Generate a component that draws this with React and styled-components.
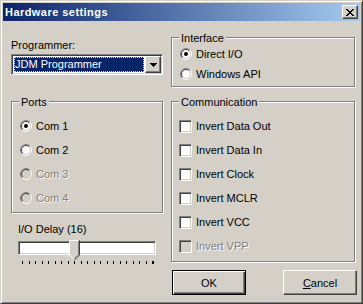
import React from 'react'
import styled, { createGlobalStyle } from 'styled-components'

const GlobalStyle = createGlobalStyle`
  body {
    margin: 0;
    background: #d4d0c8;
  }
`

const FACE = '#d4d0c8'

const Window = styled.div`
  width: 363px;
  height: 304px;
  box-sizing: border-box;
  display: flex;
  flex-direction: column;
  padding: 2px;
  background: ${FACE};
  border: 1px solid;
  border-color: ${FACE} #404040 #404040 ${FACE};
  box-shadow: inset 1px 1px #fff, inset -1px -1px #808080;
  font: 11px 'Liberation Sans', Arial, sans-serif;
  color: #000;
`

const TitleBar = styled.div`
  height: 18px;
  flex: none;
  display: flex;
  align-items: center;
  justify-content: space-between;
  padding: 0 2px;
  background: linear-gradient(to right, #0a246a, #a6caf0);
`

const Title = styled.span`
  color: #fff;
  font-weight: bold;
  letter-spacing: 0.45px;
  line-height: 13px;
`

const Raised = styled.button`
  box-sizing: border-box;
  margin: 0;
  padding: 0;
  display: flex;
  align-items: center;
  justify-content: center;
  background: ${FACE};
  border: 1px solid;
  border-color: #fff #404040 #404040 #fff;
  box-shadow: inset -1px -1px #808080;
  font: inherit;
  color: #000;
`

const CloseButton = styled(Raised)`
  width: 16px;
  height: 14px;
`

const Client = styled.div`
  flex: 1;
  display: grid;
  grid-template-columns: 152px 184px;
  column-gap: 8px;
  padding-left: 8px;
  align-items: start;
`

const Column = styled.div`
  display: flex;
  flex-direction: column;
  align-items: flex-start;
`

const Label = styled.div`
  line-height: 13px;
  margin-top: ${p => p.$top}px;
  margin-left: ${p => p.$left || 0}px;
`

const Combo = styled.div`
  width: 152px;
  height: 21px;
  box-sizing: border-box;
  margin-top: 2px;
  padding: 1px;
  display: flex;
  background: #fff;
  border: 1px solid;
  border-color: #808080 #fff #fff #808080;
  box-shadow: inset 1px 1px #404040, inset -1px -1px ${FACE};
`

const ComboField = styled.div`
  flex: 1;
  margin: 1px;
  box-sizing: border-box;
  border: 1px dotted #f5db95;
  background: #0a246a;
  color: #fff;
  line-height: 13px;
  white-space: nowrap;
`

const ComboButton = styled(Raised)`
  width: 16px;
  height: 100%;
`

const Group = styled.div`
  position: relative;
  box-sizing: border-box;
  width: 100%;
  height: ${p => p.$height}px;
  margin-top: ${p => p.$top}px;
  padding: ${p => p.$pad};
  border: 1px solid #808080;
  box-shadow: inset 1px 1px #fff, 1px 1px #fff;
`

const Legend = styled.span`
  position: absolute;
  top: -6px;
  left: 7px;
  padding: 0 2px;
  line-height: 13px;
  background: ${FACE};
`

const Option = styled.div`
  display: flex;
  align-items: center;
  gap: 4px;
  height: ${p => p.$row}px;
  line-height: 13px;
  color: ${p => (p.$disabled ? '#808080' : '#000')};
  text-shadow: ${p => (p.$disabled ? '1px 1px #fff' : 'none')};
`

const CheckBox = styled.span`
  width: 13px;
  height: 13px;
  box-sizing: border-box;
  flex: none;
  border: 1px solid;
  border-color: #808080 #fff #fff #808080;
  box-shadow: inset 1px 1px #404040, inset -1px -1px ${FACE};
  background: ${p => (p.$disabled ? FACE : '#fff')};
`

const Slider = styled.div`
  position: relative;
  margin-top: 3px;
  padding-left: 7px;
  width: 138px;
`

const Channel = styled.div`
  margin-top: 2px;
  width: 138px;
  height: 14px;
  box-sizing: border-box;
  background: #fff;
  border: 1px solid;
  border-color: #808080 #fff #fff #808080;
  box-shadow: inset 1px 1px #404040, inset -1px -1px ${FACE};
`

const Thumb = styled.svg`
  position: absolute;
  top: 1px;
  display: block;
`

const Ticks = styled.svg`
  display: block;
  margin-top: 6px;
`

const ButtonRow = styled.div`
  margin-top: 8px;
  margin-left: 1px;
  width: 185px;
  display: flex;
  justify-content: space-between;
`

const PushButton = styled(Raised)`
  width: 74px;
  height: 25px;
`

const DefaultButton = styled(PushButton)`
  border: 1px solid #000;
  box-shadow: inset 1px 1px #fff, inset -1px -1px #404040, inset -2px -2px #808080;
`

function Radio({ checked, disabled }) {
  const a = (r) => {
    const d = r * Math.SQRT1_2
    return { x1: 6 - d, y1: 6 + d, x2: 6 + d, y2: 6 - d }
  }
  const o = a(5.5)
  const i = a(4.5)
  return (
    <svg width="12" height="12" viewBox="0 0 12 12" style={{ flex: 'none' }}>
      <circle cx="6" cy="6" r="4.5" fill={disabled ? FACE : '#fff'} />
      <path d={`M${o.x1} ${o.y1}A5.5 5.5 0 0 1 ${o.x2} ${o.y2}`} stroke="#808080" fill="none" />
      <path d={`M${o.x2} ${o.y2}A5.5 5.5 0 0 1 ${o.x1} ${o.y1}`} stroke="#fff" fill="none" />
      <path d={`M${i.x1} ${i.y1}A4.5 4.5 0 0 1 ${i.x2} ${i.y2}`} stroke="#404040" fill="none" />
      <path d={`M${i.x2} ${i.y2}A4.5 4.5 0 0 1 ${i.x1} ${i.y1}`} stroke={FACE} fill="none" />
      {checked && <circle cx="6" cy="6" r="2" fill="#000" />}
    </svg>
  )
}

const ports = [
  { name: 'Com 1', checked: true },
  { name: 'Com 2' },
  { name: 'Com 3', disabled: true },
  { name: 'Com 4', disabled: true },
]

const lines = [
  { name: 'Invert Data Out' },
  { name: 'Invert Data In' },
  { name: 'Invert Clock' },
  { name: 'Invert MCLR' },
  { name: 'Invert VCC' },
  { name: 'Invert VPP', disabled: true },
]

const delay = 16
const delayMax = 40

export default function App() {
  const tickXs = []
  for (let i = 0; i <= 20; i++) tickXs.push(Math.round(4 + i * 6.5) + 0.5)
  tickXs.push(135.5)
  const thumbLeft = 7 + 4 + (130 * delay) / delayMax - 5.5

  return (
    <>
      <GlobalStyle />
      <Window>
        <TitleBar>
          <Title>Hardware settings</Title>
          <CloseButton>
            <svg width="8" height="7" viewBox="0 0 8 7">
              <path
                d="M0 0h2v1H0zM6 0h2v1H6zM1 1h2v1H1zM5 1h2v1H5zM2 2h4v1H2zM3 3h2v1H3zM2 4h4v1H2zM1 5h2v1H1zM5 5h2v1H5zM0 6h2v1H0zM6 6h2v1H6z"
                fill="#000"
              />
            </svg>
          </CloseButton>
        </TitleBar>

        <Client>
          <Column>
            <Label $top={18}>Programmer:</Label>
            <Combo>
              <ComboField>JDM Programmer</ComboField>
              <ComboButton>
                <svg width="7" height="4" viewBox="0 0 7 4">
                  <path d="M0 0h7v1H0zM1 1h5v1H1zM2 2h3v1H2zM3 3h1v1H3z" fill="#000" />
                </svg>
              </ComboButton>
            </Combo>

            <Group $top={26} $height={112} $pad="12px 0 0 8px">
              <Legend>Ports</Legend>
              {ports.map(p => (
                <Option key={p.name} $row={24} $disabled={p.disabled}>
                  <Radio checked={p.checked} disabled={p.disabled} />
                  {p.name}
                </Option>
              ))}
            </Group>

            <Label $top={10} $left={7}>I/O Delay ({delay})</Label>
            <Slider>
              <Channel />
              <Thumb width="11" height="20" viewBox="0 0 11 20" style={{ left: thumbLeft }}>
                <path d="M0 0H11V15L5.5 20.5L0 15Z" fill={FACE} />
                <path d="M0.5 15.5V0.5H10" stroke="#fff" fill="none" />
                <path d="M0.5 15L5 19.5" stroke="#fff" fill="none" />
                <path d="M10.5 0V15L5.5 20" stroke="#404040" fill="none" />
                <path d="M9.5 1V14.6L5.5 18.6" stroke="#808080" fill="none" />
              </Thumb>
              <Ticks width="140" height="3" viewBox="0 0 140 3">
                {tickXs.map((x, i) => (
                  <line key={i} x1={x} y1="0" x2={x} y2="3" stroke="#000" />
                ))}
              </Ticks>
            </Slider>
          </Column>

          <Column>
            <Group $top={16} $height={50} $pad="6px 0 0 8px">
              <Legend>Interface</Legend>
              <Option $row={20}>
                <Radio checked />
                Direct I/O
              </Option>
              <Option $row={20}>
                <Radio />
                Windows API
              </Option>
            </Group>

            <Group $top={14} $height={161} $pad="12px 0 0 7px">
              <Legend>Communication</Legend>
              {lines.map(l => (
                <Option key={l.name} $row={24} $disabled={l.disabled}>
                  <CheckBox $disabled={l.disabled} />
                  {l.name}
                </Option>
              ))}
            </Group>

            <ButtonRow>
              <DefaultButton>OK</DefaultButton>
              <PushButton>
                <span><u>C</u>ancel</span>
              </PushButton>
            </ButtonRow>
          </Column>
        </Client>
      </Window>
    </>
  )
}
